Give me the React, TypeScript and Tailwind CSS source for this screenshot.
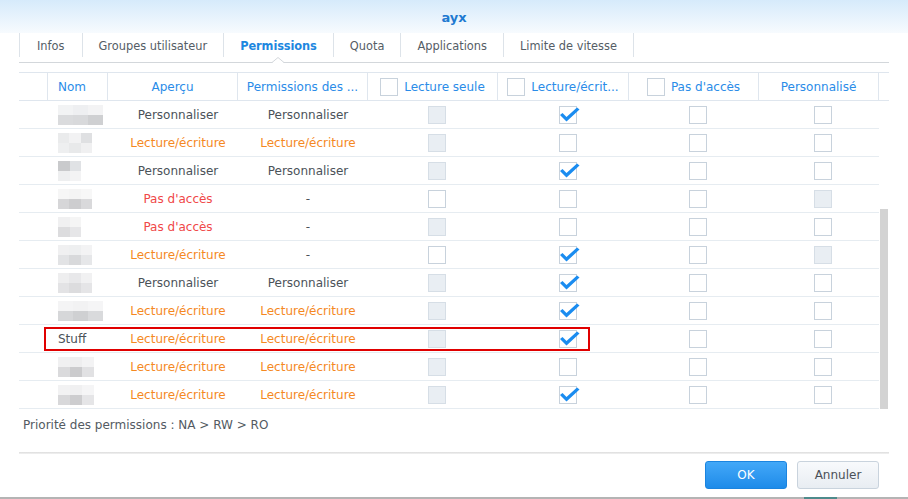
type Box = 'e' | 'd' | 'c'
type Tone = 'dark' | 'orange' | 'red'

interface Cell { w: string; top: string; bot: string }

interface Row {
  name?: string
  smudge?: Cell[]
  apercu: [string, Tone]
  perm: [string, Tone]
  boxes: [Box, Box, Box, Box]
}

const TONE: Record<Tone, string> = {
  dark: 'text-[#4b5259]',
  orange: 'text-[#f5891f]',
  red: 'text-[#f04848]',
}

const PERSO: [string, Tone] = ['Personnaliser', 'dark']
const RW: [string, Tone] = ['Lecture/écriture', 'orange']
const NA: [string, Tone] = ["Pas d'accès", 'red']
const DASH: [string, Tone] = ['-', 'dark']

const ROWS: Row[] = [
  {
    smudge: [
      { w: 'w-[15px]', top: 'bg-[#f2f3f4]', bot: 'bg-[#dadbdd]' },
      { w: 'w-[15px]', top: 'bg-[#eeeff1]', bot: 'bg-[#d8d9db]' },
      { w: 'w-[15px]', top: 'bg-[#f3f3f4]', bot: 'bg-[#cfd0d2]' },
    ],
    apercu: PERSO, perm: PERSO, boxes: ['d', 'c', 'e', 'e'],
  },
  {
    smudge: [
      { w: 'w-[11px]', top: 'bg-[#eaebec]', bot: 'bg-[#eeeff0]' },
      { w: 'w-[12px]', top: 'bg-[#f2f2f3]', bot: 'bg-[#e8e9ea]' },
      { w: 'w-[11px]', top: 'bg-[#dfe0e2]', bot: 'bg-[#f0f0f1]' },
    ],
    apercu: RW, perm: RW, boxes: ['d', 'e', 'e', 'e'],
  },
  {
    smudge: [
      { w: 'w-[12px]', top: 'bg-[#c9cacc]', bot: 'bg-[#eeeff0]' },
      { w: 'w-[11px]', top: 'bg-[#e0e2e5]', bot: 'bg-[#f3f3f4]' },
    ],
    apercu: PERSO, perm: PERSO, boxes: ['d', 'c', 'e', 'e'],
  },
  {
    smudge: [
      { w: 'w-[11px]', top: 'bg-[#f6f6f6]', bot: 'bg-[#d6d6d8]' },
      { w: 'w-[12px]', top: 'bg-[#f4f4f4]', bot: 'bg-[#cdcdcf]' },
      { w: 'w-[11px]', top: 'bg-[#f7f7f7]', bot: 'bg-[#d9d9db]' },
    ],
    apercu: NA, perm: DASH, boxes: ['e', 'e', 'e', 'd'],
  },
  {
    smudge: [
      { w: 'w-[12px]', top: 'bg-[#f0f0f1]', bot: 'bg-[#dcdcde]' },
      { w: 'w-[11px]', top: 'bg-[#f5f5f5]', bot: 'bg-[#e6e6e8]' },
    ],
    apercu: NA, perm: DASH, boxes: ['d', 'e', 'e', 'e'],
  },
  {
    smudge: [
      { w: 'w-[11px]', top: 'bg-[#f0f0f1]', bot: 'bg-[#e2e3e5]' },
      { w: 'w-[12px]', top: 'bg-[#eeeff0]', bot: 'bg-[#d8d9db]' },
      { w: 'w-[11px]', top: 'bg-[#f3f3f4]', bot: 'bg-[#e6e7e9]' },
    ],
    apercu: RW, perm: DASH, boxes: ['e', 'c', 'e', 'd'],
  },
  {
    smudge: [
      { w: 'w-[11px]', top: 'bg-[#eeeeef]', bot: 'bg-[#e3e3e5]' },
      { w: 'w-[12px]', top: 'bg-[#e8e8ea]', bot: 'bg-[#dcdcde]' },
      { w: 'w-[11px]', top: 'bg-[#f1f1f2]', bot: 'bg-[#e5e5e7]' },
    ],
    apercu: PERSO, perm: PERSO, boxes: ['d', 'c', 'e', 'e'],
  },
  {
    smudge: [
      { w: 'w-[15px]', top: 'bg-[#f4f4f5]', bot: 'bg-[#d6d7d9]' },
      { w: 'w-[15px]', top: 'bg-[#f2f2f3]', bot: 'bg-[#cfd0d2]' },
      { w: 'w-[15px]', top: 'bg-[#f5f5f6]', bot: 'bg-[#d9dadc]' },
    ],
    apercu: RW, perm: RW, boxes: ['d', 'c', 'e', 'e'],
  },
  { name: 'Stuff', apercu: RW, perm: RW, boxes: ['d', 'c', 'e', 'e'] },
  {
    smudge: [
      { w: 'w-[12px]', top: 'bg-[#f0f0f1]', bot: 'bg-[#dadadc]' },
      { w: 'w-[12px]', top: 'bg-[#eeeeef]', bot: 'bg-[#cbcbcd]' },
      { w: 'w-[12px]', top: 'bg-[#f3f3f4]', bot: 'bg-[#e1e1e3]' },
    ],
    apercu: RW, perm: RW, boxes: ['d', 'e', 'e', 'e'],
  },
  {
    smudge: [
      { w: 'w-[12px]', top: 'bg-[#f2f2f3]', bot: 'bg-[#d8d8da]' },
      { w: 'w-[12px]', top: 'bg-[#f0f0f1]', bot: 'bg-[#cdcdcf]' },
      { w: 'w-[12px]', top: 'bg-[#f5f5f6]', bot: 'bg-[#e5e5e7]' },
    ],
    apercu: RW, perm: RW, boxes: ['d', 'c', 'e', 'e'],
  },
]

const TABS = ['Infos', 'Groupes utilisateur', 'Permissions', 'Quota', 'Applications', 'Limite de vitesse']

function Check({ kind }: { kind: Box }) {
  if (kind === 'd') {
    return <span className="block w-[18px] h-[18px] border border-[#d6dee6] bg-[#e9eef3]" />
  }
  return (
    <span className="relative block w-[18px] h-[18px] border border-[#c8d2dc] bg-white">
      {kind === 'c' && (
        <svg className="absolute left-[-1px] top-[-1px] w-[22px] h-[18px] overflow-visible" viewBox="0 0 22 18">
          <polygon points="1,9 3.5,7 7.5,11 18,1.5 20.5,3.5 7.5,15.5" fill="#1a8cf0" />
        </svg>
      )}
    </span>
  )
}

function Smudge({ cells }: { cells: Cell[] }) {
  return (
    <div className="flex">
      {cells.map((c, i) => (
        <div key={i} className={`flex flex-col ${c.w}`}>
          <span className={`h-[10px] ${c.top}`} />
          <span className={`h-[10px] ${c.bot}`} />
        </div>
      ))}
    </div>
  )
}

export default function App() {
  return (
    <div className="relative w-[908px] h-[499px] bg-white overflow-hidden font-['DejaVu_Sans',sans-serif] text-[12px] flex flex-col">
      {/* title */}
      <div className="h-[33px] shrink-0 flex items-center justify-center pt-[2px] bg-gradient-to-b from-[#d6eafb] to-[#f7fbfe]">
        <span className="text-[13px] font-bold text-[#1f7ad1]">ayx</span>
      </div>

      {/* tabs */}
      <div className="mx-[19px] h-[30px] shrink-0 flex items-start border-b border-[#d3d7db]">
        {TABS.map((t, i) => {
          const active = t === 'Permissions'
          return (
            <div
              key={t}
              className={`relative h-[24px] flex items-center pt-[3px] px-4 border-l border-[#dde3e9] text-[11.4px] ${i === 0 ? 'pl-[17px] pr-[17px]' : ''} ${i === TABS.length - 1 ? 'border-r' : ''} ${active ? 'font-bold text-[#1d87e0] tracking-[-0.1px]' : 'text-[#555d66]'}`}
            >
              {t}
              {active && (
                <svg className="absolute top-[24px] left-1/2 -translate-x-1/2 w-[12px] h-[6px]" viewBox="0 0 12 6">
                  <polygon points="0,6 6,0 12,6" fill="#fff" />
                  <polyline points="0,5.5 6,0.5 12,5.5" fill="none" stroke="#d3d7db" strokeWidth="1" />
                </svg>
              )}
            </div>
          )
        })}
      </div>

      {/* table */}
      <div className="mx-[19px] mt-[9px] shrink-0">
        <div className="grid grid-cols-[29px_60px_130px_130px_130px_131px_130px_120px_10px] h-[29px] border-y border-[#dfe6ee] text-[#2a8ce8]">
          <div className="border-r border-[#dfe6ee]" />
          <div className="border-r border-[#dfe6ee] flex items-center pl-[10px]">Nom</div>
          <div className="border-r border-[#dfe6ee] flex items-center justify-center">Aperçu</div>
          <div className="border-r border-[#dfe6ee] flex items-center justify-center">Permissions des ...</div>
          <div className="border-r border-[#dfe6ee] flex items-center justify-center gap-[6px]">
            <Check kind="e" />
            Lecture seule
          </div>
          <div className="border-r border-[#dfe6ee] flex items-center justify-center gap-[6px]">
            <Check kind="e" />
            Lecture/écrit...
          </div>
          <div className="border-r border-[#dfe6ee] flex items-center justify-center gap-[6px]">
            <Check kind="e" />
            Pas d'accès
          </div>
          <div className="border-r border-[#dfe6ee] flex items-center justify-center">Personnalisé</div>
          <div />
        </div>

        <div className="flex">
          <div className="w-[860px]">
            {ROWS.map((r, i) => (
              <div key={i} className="grid grid-cols-[29px_60px_130px_130px_130px_131px_130px_120px] h-[28px] border-b border-[#e6ecf1]">
                <div />
                <div className="flex items-center pl-[10px] pt-[1px] text-[#4b5259]">
                  {r.name ? r.name : r.smudge && <Smudge cells={r.smudge} />}
                </div>
                <div className={`flex items-center justify-center pl-[10px] pt-[1px] ${TONE[r.apercu[1]]}`}>{r.apercu[0]}</div>
                <div className={`flex items-center justify-center pl-[10px] pt-[1px] ${TONE[r.perm[1]]}`}>{r.perm[0]}</div>
                {r.boxes.map((b, j) => (
                  <div key={j} className="flex items-center justify-center pl-[8px]">
                    <Check kind={b} />
                  </div>
                ))}
              </div>
            ))}
          </div>
          <div className="w-[10px]">
            <div className="ml-[1px] mt-[108px] w-[8px] h-[200px] bg-[#d3d3d3]" />
          </div>
        </div>
      </div>

      {/* footer note */}
      <div className="h-[43px] shrink-0 pt-[9px] pl-[23px] text-[#535a62] leading-[14px]">
        Priorité des permissions : NA &gt; RW &gt; RO
      </div>
      <div className="mx-[19px] h-[2px] shrink-0 bg-gradient-to-b from-[#dcdcdc] to-[#f2f2f2]" />

      {/* buttons */}
      <div className="flex-1 flex justify-end items-start gap-[10px] pt-[7px] pr-[29px]">
        <button className="w-[82px] h-[28px] rounded-[3px] border border-[#1b84df] bg-gradient-to-b from-[#42a8f8] to-[#1d8be9] text-white text-[12px]">
          OK
        </button>
        <button className="w-[82px] h-[28px] rounded-[3px] border border-[#c9d3dd] bg-gradient-to-b from-[#f8fafc] to-[#e8edf2] text-[#4a5057] text-[12px]">
          Annuler
        </button>
      </div>

      {/* window bottom edge */}
      <div className="h-[2px] shrink-0 flex bg-[#b4b4b4]">
        <div className="ml-[804px] w-[33px] bg-[#4e8b8c]" />
      </div>

      {/* annotation */}
      <div className="absolute left-[44px] top-[327px] w-[546px] h-[24px] border-2 border-[#e00000]" />
    </div>
  )
}
